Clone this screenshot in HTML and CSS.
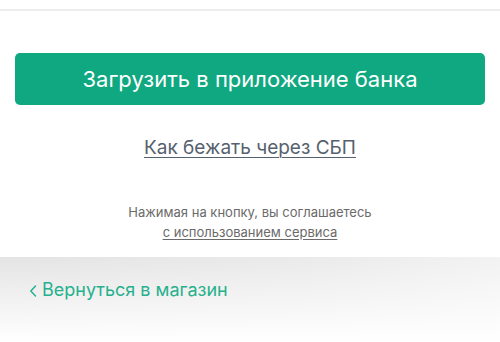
FILE: index.html
```html
<!DOCTYPE html>
<html lang="ru">
<head>
    <meta charset="UTF-8">
    <meta name="viewport" content="width=device-width, initial-scale=1.0">
    <title>Оплата через СБП</title>
    <link rel="stylesheet" href="styles.css">
</head>
<body>
    <div class="top-bar"></div>

    <div class="content">
        <button class="bank-button" type="button">Загрузить в приложение банка</button>

        <a class="help-link" href="#">Как бежать через СБП</a>

        <p class="agreement">
            Нажимая на кнопку, вы соглашаетесь<br>
            <a href="#">с использованием сервиса</a>
        </p>
    </div>

    <!-- Back to shop -->
    <div class="bottom-panel">
        <a class="back-link" href="#">
            <svg class="back-icon" width="8" height="14" viewBox="0 0 8 14" fill="none">
                <path d="M6.5 2L1.8 7l4.7 5" stroke="currentColor" stroke-width="1.5" stroke-linecap="round" stroke-linejoin="round"/>
            </svg>
            Вернуться в магазин
        </a>
    </div>
</body>
</html>
```

FILE: styles.css
```css
body {
    margin: 0;
    background: #fff;
    font-family: Inter, "Noto Sans", sans-serif;
}

.top-bar {
    height: 9px;
    border-bottom: 2px solid #ececec;
}

.content {
    display: flex;
    flex-direction: column;
    align-items: center;
    padding: 42px 15px 0;
    height: 204px;
}

.bank-button {
    width: 100%;
    height: 52px;
    border: none;
    border-radius: 5px;
    background-color: #0fa880;
    color: #fff;
    font-family: inherit;
    font-size: 22px;
    cursor: pointer;
}

.help-link {
    margin-top: 31px;
    color: #56616d;
    font-size: 19px;
    text-decoration: underline;
    text-underline-offset: 3px;
    text-decoration-thickness: 1px;
}

.agreement {
    margin: 43px 0 0;
    text-align: center;
    color: #6a6a6a;
    font-size: 13px;
    line-height: 20px;
}

.agreement a {
    color: #6a6a6a;
    text-underline-offset: 2px;
}

/* Back panel */
.bottom-panel {
    height: 85px;
    background: linear-gradient(to bottom, rgba(255, 255, 255, 0) 0%, #fff 100%),
                linear-gradient(to right, #e4e4e4 0%, #eaeaea 60%, #f2f2f2 100%);
    padding: 22px 0 0 29px;
    box-sizing: border-box;
}

.back-link {
    display: inline-flex;
    align-items: center;
    gap: 5px;
    color: #27b08d;
    font-size: 18px;
    text-decoration: none;
}

.back-icon {
    margin-top: 2px;
}
```
